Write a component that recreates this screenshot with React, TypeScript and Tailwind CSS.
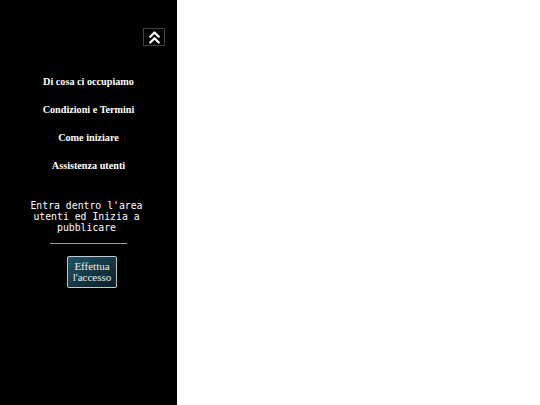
import React from "react";

export default function App() {
  const links = ["Di cosa ci occupiamo", "Condizioni e Termini", "Come iniziare", "Assistenza utenti"];
  return (
    <div className="flex h-[405px] w-[540px] bg-white">
      <aside className="flex h-full w-[177px] flex-col items-center bg-black">
        <div className="flex w-full justify-end pr-[12px] pt-[28px]">
          <button className="flex h-[18px] w-[22px] items-center justify-center border border-[#444444] bg-black">
            <svg width="17" height="17" viewBox="0 0 24 24" fill="none" stroke="white" strokeWidth="3.2" strokeLinecap="round" strokeLinejoin="round">
              <polyline points="18 11 12 5 6 11" />
              <polyline points="18 19 12 13 6 19" />
            </svg>
          </button>
        </div>
        <nav className="mt-[29px] flex flex-col items-center gap-[15px] font-['Liberation_Serif',serif] text-[10.2px] font-bold leading-[13px] text-white">
          {links.map((l) => (
            <a key={l} className="block">{l}</a>
          ))}
        </nav>
        <p className="mr-[4px] mt-[28px] text-center font-['DejaVu_Sans_Mono',monospace] text-[9.8px] leading-[11px] text-white">
          Entra dentro l'area<br />utenti ed Inizia a<br />pubblicare
        </p>
        <div className="mt-[10px] h-px w-[77px] bg-[#9a9a9a]" />
        <button className="ml-[7px] mt-[12px] h-[32px] w-[50px] rounded-[2px] border border-[#c8c8c8] bg-gradient-to-br from-[#1d5566] to-[#0a1f29] font-['Liberation_Serif',serif] text-[11px] leading-[11px] text-[#ececec]">
          Effettua<br />l'accesso
        </button>
      </aside>
      <main className="flex-1 bg-white" />
    </div>
  );
}
